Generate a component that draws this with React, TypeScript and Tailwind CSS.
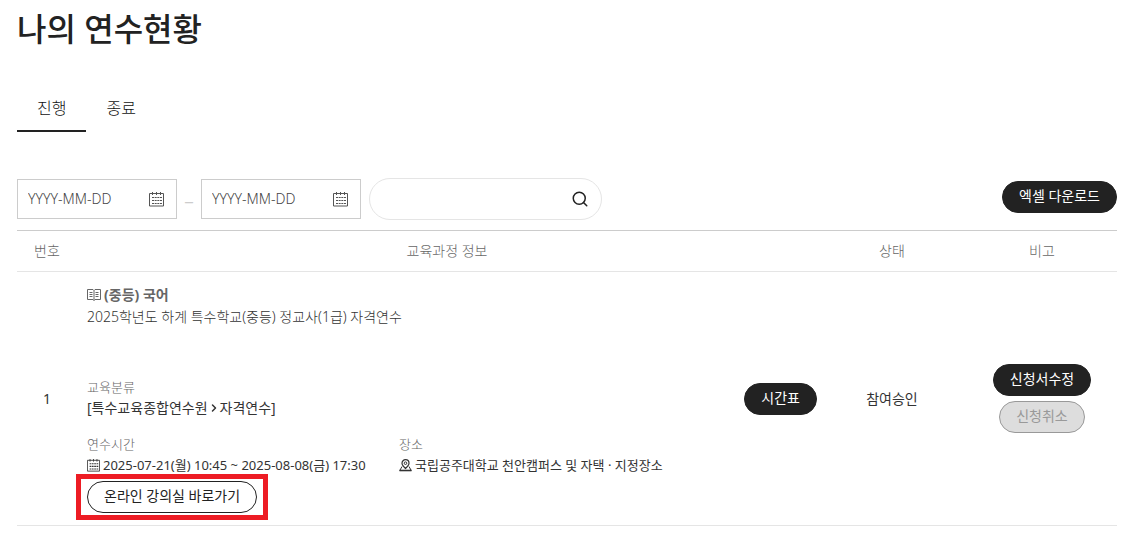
import type { ReactNode } from "react";
import { ChevronRight, Search } from "lucide-react";
import clsx from "clsx";

const TABS = ["진행", "종료"];

function CalendarIcon({ className }: { className?: string }) {
  return (
    <svg viewBox="0 0 15 15" fill="none" stroke="currentColor" aria-hidden="true" className={className}>
      <path d="M0.5 1.5h14v12.5h-14z" />
      <path d="M3.5 0v3M7.5 0v3M11.5 0v3" />
      <path d="M3 5.5h10M3 8.5h10M3 11.5h10" strokeWidth="1.2" strokeDasharray="2 0.66" />
    </svg>
  );
}

function BookIcon({ className }: { className?: string }) {
  return (
    <svg viewBox="0 0 14 13" fill="none" stroke="currentColor" aria-hidden="true" className={className}>
      <path d="M7 1.5L6 0.5H0.5v10H6l1 1 1-1h5.5v-10H8zM7 1.5v10" />
      <path d="M2.5 3.5h3M2.5 5.5h3M2.5 7.5h3M8.5 3.5h3M8.5 5.5h3M8.5 7.5h3" />
    </svg>
  );
}

function PlaceIcon({ className }: { className?: string }) {
  return (
    <svg viewBox="0 0 13 13" fill="none" stroke="currentColor" aria-hidden="true" className={className}>
      <path d="M6.5 9.5C4.5 7.5 3 6 3 4.2a3.500 3.500 0 0 1 7 0C10 6 8.500 7.500 6.500 9.500z" strokeWidth="1.200" />
      <circle cx="6.5" cy="4.2" r="1.3" />
      <path d="M3 7.5L0.8 11.5h11.4L10 7.5" />
      <path d="M0.5 11.5h12" strokeWidth="1.6" />
    </svg>
  );
}

function DateField({ label }: { label: string }) {
  return (
    <div className="flex h-10 w-40 items-center border border-[#ccc] pr-3 pl-[10px]">
      <input
        type="text"
        aria-label={label}
        placeholder="YYYY-MM-DD"
        className="min-w-0 flex-1 text-sm font-light outline-none placeholder:text-[#444]"
      />
      <button type="button" aria-label={`${label} 선택`} className="text-[#555]">
        <CalendarIcon className="size-[15px]" />
      </button>
    </div>
  );
}

function PillButton({ children, variant = "dark" }: { children: ReactNode; variant?: "dark" | "outline" | "muted" }) {
  return (
    <button
      type="button"
      disabled={variant === "muted"}
      className={clsx(
        "flex h-8 items-center rounded-full border px-4 pb-[2px] text-sm leading-5 whitespace-nowrap",
        variant === "dark" && "border-[#222] bg-[#222] text-white",
        variant === "outline" && "border-[#222] bg-white text-[#222]",
        variant === "muted" && "border-[#999] bg-[#ddd] text-[#999]"
      )}
    >
      {children}
    </button>
  );
}

function Detail({ label, className, children }: { label: string; className?: string; children: ReactNode }) {
  return (
    <div className={className}>
      <dt className="text-[13px] leading-5 font-light text-[#666]">{label}</dt>
      <dd className="flex items-center gap-[3px] leading-[22px] text-[#333]">{children}</dd>
    </div>
  );
}

export default function App() {
  return (
    <main
      lang="ko"
      className="bg-white pt-2 pr-[19px] pb-5 pl-[17px] font-['Noto_Sans','Noto_Sans_CJK_KR',sans-serif] text-[#333]"
    >
      <h1 className="text-[32px] leading-[42px] font-medium text-[#222]">나의 연수현황</h1>

      <div role="tablist" className="mt-9 flex">
        {TABS.map((tab, i) => (
          <button
            key={tab}
            type="button"
            role="tab"
            aria-selected={i === 0}
            className={clsx(
              "h-[46px] border-b-2 px-5 text-base font-light text-[#111]",
              i === 0 ? "border-[#222]" : "border-transparent"
            )}
          >
            {tab}
          </button>
        ))}
      </div>

      <div className="mt-[46px] flex items-start justify-between pb-[10px]">
        <form className="flex items-center gap-2">
          <DateField label="시작일" />
          <span className="w-2 pb-3 text-center text-lg leading-5 text-[#ccc]">_</span>
          <DateField label="종료일" />
          <div className="flex h-[42px] w-[233px] items-center rounded-full border border-[#e5e5e5] pr-3 pl-4">
            <input type="text" aria-label="검색어" className="min-w-0 flex-1 text-sm outline-none" />
            <button type="button" aria-label="검색" className="text-[#222]">
              <Search className="size-[18px]" strokeWidth={2} />
            </button>
          </div>
        </form>
        <div className="pt-[3px]">
          <PillButton>엑셀 다운로드</PillButton>
        </div>
      </div>

      <table className="w-full table-fixed border-t border-[#ccc] text-sm">
        <thead>
          <tr className="h-[41px] border-b border-[#e5e5e5] text-[#666]">
            <th className="w-[60px] font-light">번호</th>
            <th className="font-light">교육과정 정보</th>
            <th className="w-[150px] font-light">상태</th>
            <th className="w-[150px] font-light">비고</th>
          </tr>
        </thead>
        <tbody>
          <tr className="border-b border-[#e5e5e5]">
            <td className="text-center">1</td>
            <td className="pt-3 pb-3 pl-[10px]">
              <div className="flex items-center justify-between">
                <div>
                  <p className="flex items-center gap-[3px] leading-[22px] font-bold text-[#666]">
                    <BookIcon className="h-[13px] w-[14px]" />
                    (중등) 국어
                  </p>
                  <p className="leading-[22px] font-light text-[#333]">
                    2025학년도 하계 특수학교(중등) 정교사(1급) 자격연수
                  </p>

                  <dl className="mt-[49px]">
                    <Detail label="교육분류">
                      <span className="flex items-center">
                        [특수교육종합연수원
                        <ChevronRight className="size-3" strokeWidth={3} />
                        자격연수]
                      </span>
                    </Detail>
                    <div className="mt-[15px] flex text-[13px]">
                      <Detail label="연수시간" className="w-[312px]">
                        <CalendarIcon className="size-[13px]" />
                        2025-07-21(월) 10:45 ~ 2025-08-08(금) 17:30
                      </Detail>
                      <Detail label="장소">
                        <PlaceIcon className="size-[13px]" />
                        국립공주대학교 천안캠퍼스 및 자택 · 지정장소
                      </Detail>
                    </div>
                  </dl>

                  <div className="relative mt-[5px] w-fit">
                    <PillButton variant="outline">온라인 강의실 바로가기</PillButton>
                    <span className="pointer-events-none absolute -inset-x-[11px] -inset-y-[7px] border-[5px] border-[#ed1c24]" />
                  </div>
                </div>
                <PillButton>시간표</PillButton>
              </div>
            </td>
            <td className="text-center">참여승인</td>
            <td>
              <div className="flex flex-col items-center gap-[5px]">
                <PillButton>신청서수정</PillButton>
                <PillButton variant="muted">신청취소</PillButton>
              </div>
            </td>
          </tr>
        </tbody>
      </table>
    </main>
  );
}
